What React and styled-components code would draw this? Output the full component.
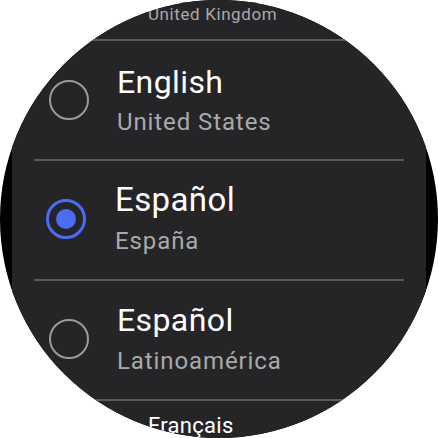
import React from 'react';
import styled, { createGlobalStyle } from 'styled-components';

const Global = createGlobalStyle`
  html, body { margin: 0; padding: 0; background: #ffffff; }
  body {
    width: 438px; height: 438px; overflow: hidden;
    font-family: Roboto, "Noto Sans", sans-serif;
    -webkit-font-smoothing: antialiased;
  }
`;

const Watch = styled.div`
  width: 438px;
  height: 438px;
  border-radius: 50%;
  overflow: hidden;
  background: #000;
  display: flex;
  justify-content: center;
`;

const List = styled.div`
  width: 414px;
  height: 438px;
  background: #252527;
  display: flex;
  flex-direction: column;
`;

const Edge = styled.div`
  height: ${p => p.h}px;
  padding-left: 136px;
  padding-top: ${p => p.pt}px;
  box-sizing: border-box;
  font-size: ${p => p.size}px;
  line-height: ${p => p.lh}px;
  letter-spacing: ${p => p.ls}px;
  color: ${p => p.color};
  white-space: nowrap;
`;

const Divider = styled.div`
  height: 2px;
  margin: 0 22px;
  background: #5a5a5c;
  flex: none;
`;

const Row = styled.div`
  height: 118px;
  flex: none;
  display: flex;
  align-items: center;
  padding-left: ${p => p.pad}px;
`;

const Radio = styled.div`
  width: 40px;
  height: 40px;
  box-sizing: border-box;
  border-radius: 50%;
  border: ${p => (p.checked ? '3.5px solid #4a6cf6' : '2.5px solid #9b9b9d')};
  display: flex;
  align-items: center;
  justify-content: center;
  margin-top: ${p => p.shift}px;
  flex: none;
  &::after {
    content: '';
    display: ${p => (p.checked ? 'block' : 'none')};
    width: 20px;
    height: 20px;
    border-radius: 50%;
    background: #4a6cf6;
  }
`;

const Text = styled.div`
  display: flex;
  flex-direction: column;
  gap: ${p => p.gap}px;
  margin-left: ${p => p.gapLeft}px;
  margin-top: ${p => p.shift}px;
  white-space: nowrap;
`;

const Title = styled.div`
  font-size: ${p => p.size}px;
  line-height: 38px;
  letter-spacing: 0.4px;
  color: #ffffff;
`;

const Subtitle = styled.div`
  font-size: 24px;
  line-height: 30px;
  letter-spacing: 0.9px;
  color: #a9a9ab;
`;

const rows = [
  { title: 'English', sub: 'United States', checked: false, pad: 37, gapLeft: 28, size: 32, shift: 0, rshift: 0, gap: 6 },
  { title: 'Español', sub: 'España', checked: true, pad: 34, gapLeft: 29, size: 33, shift: -4, rshift: -2, gap: 7 },
  { title: 'Español', sub: 'Latinoamérica', checked: false, pad: 37, gapLeft: 28, size: 32, shift: -3, rshift: -3, gap: 7 },
];

export default function App() {
  return (
    <>
      <Global />
      <Watch>
        <List>
          <Edge h={39} pt={4} size={17} lh={20} ls={0.6} color="#a9a9ab">United Kingdom</Edge>
          {rows.map((r, i) => (
            <React.Fragment key={i}>
              <Divider />
              <Row pad={r.pad}>
                <Radio checked={r.checked} shift={r.rshift} />
                <Text gapLeft={r.gapLeft} shift={r.shift} gap={r.gap}>
                  <Title size={r.size}>{r.title}</Title>
                  <Subtitle>{r.sub}</Subtitle>
                </Text>
              </Row>
            </React.Fragment>
          ))}
          <Divider />
          <Edge h={37} pt={12} size={22} lh={26} ls={0.3} color="#ffffff">Français</Edge>
        </List>
      </Watch>
    </>
  );
}
